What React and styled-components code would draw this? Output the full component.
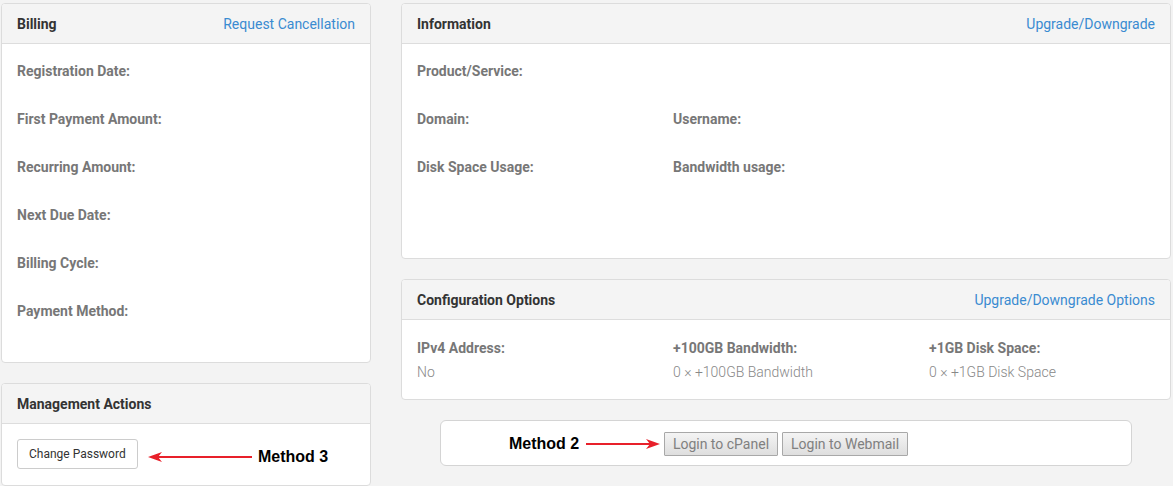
import React from "react";
import styled, { createGlobalStyle } from "styled-components";

const GlobalStyle = createGlobalStyle`
  html, body {
    margin: 0;
    padding: 0;
    background: #f3f3f3;
    font-family: Roboto, "Liberation Sans", Arial, sans-serif;
    font-size: 14px;
    color: #333;
  }
`;

const Page = styled.div`
  display: grid;
  grid-template-columns: 370px 770px;
  column-gap: 30px;
  padding: 3px 2px 0 1px;
  align-items: start;
`;

const Column = styled.div`
  display: flex;
  flex-direction: column;
  gap: ${(p) => p.gap || 21}px;
`;

const Card = styled.div`
  background: #fff;
  border: 1px solid #dcdcdc;
  border-radius: 4px;
  height: ${(p) => (p.height ? `${p.height}px` : "auto")};
  box-sizing: border-box;
  overflow: hidden;
`;

const CardHeader = styled.div`
  height: 40px;
  box-sizing: border-box;
  display: flex;
  align-items: center;
  justify-content: space-between;
  padding: 0 15px 0 15px;
  background: #f4f4f4;
  border-bottom: 1px solid #dddddd;
`;

const Title = styled.h3`
  margin: 0;
  font-size: 14px;
  font-weight: 700;
  color: #333;
`;

const HeaderLink = styled.a`
  color: #3a8bd1;
  font-size: 14px;
  text-decoration: none;
  cursor: pointer;
`;

const ListBody = styled.div`
  padding: 17px 15px 0 15px;
`;

const Row = styled.div`
  height: 48px;
`;

const Grid = styled.div`
  display: grid;
  grid-template-columns: 1fr 1fr 1fr;
  column-gap: 30px;
`;

const Label = styled.div`
  font-weight: 700;
  color: #777;
  line-height: 20px;
`;

const Value = styled.div`
  color: #888;
  font-weight: 300;
  line-height: 20px;
  margin-top: 4px;
`;

const ConfigBody = styled.div`
  padding: 18px 15px 17px 15px;
`;

const ActionBody = styled.div`
  position: relative;
  padding: 15px 15px 16px 15px;
`;

const OutlineButton = styled.button`
  font-family: Roboto, "Liberation Sans", Arial, sans-serif;
  font-size: 12px;
  color: #333;
  background: #fff;
  border: 1px solid #ccc;
  border-radius: 3px;
  height: 30px;
  padding: 0 11px;
  cursor: pointer;
`;

const LoginBox = styled.div`
  position: relative;
  align-self: center;
  width: 692px;
  height: 46px;
  box-sizing: border-box;
  background: #fff;
  border: 1px solid #d4d4d4;
  border-radius: 6px;
  display: flex;
  align-items: center;
  justify-content: center;
  gap: 4px;
`;

const GrayButton = styled.button`
  font-family: Roboto, "Liberation Sans", Arial, sans-serif;
  font-size: 14px;
  color: #808080;
  height: 24px;
  padding: 0 8px;
  margin-top: 2px;
  border: 1px solid #a8a8a8;
  border-radius: 1px;
  background: linear-gradient(#f4f4f4, #dedede);
  cursor: pointer;
`;

const Note = styled.div`
  position: absolute;
  left: ${(p) => p.left}px;
  top: ${(p) => p.top}px;
  display: flex;
  align-items: center;
  gap: ${(p) => p.gap || 6}px;
  font-family: "Liberation Sans", Arial, sans-serif;
  font-weight: 700;
  font-size: 16px;
  color: #000;
  pointer-events: none;
`;

const Arrow = ({ width, dir }) => (
  <svg width={width} height="12" viewBox={`0 0 ${width} 12`}>
    {dir === "left" ? (
      <>
        <line x1="8" y1="6" x2={width} y2="6" stroke="#e8202a" strokeWidth="2" />
        <polygon points="0,6 14,1 10,6 14,11" fill="#e8202a" />
      </>
    ) : (
      <>
        <line x1="0" y1="6" x2={width - 8} y2="6" stroke="#e8202a" strokeWidth="2" />
        <polygon points={`${width},6 ${width - 14},1 ${width - 10},6 ${width - 14},11`} fill="#e8202a" />
      </>
    )}
  </svg>
);

const billing = [
  "Registration Date:",
  "First Payment Amount:",
  "Recurring Amount:",
  "Next Due Date:",
  "Billing Cycle:",
  "Payment Method:",
];

const config = [
  { label: "IPv4 Address:", value: "No" },
  { label: "+100GB Bandwidth:", value: "0 × +100GB Bandwidth" },
  { label: "+1GB Disk Space:", value: "0 × +1GB Disk Space" },
];

export default function App() {
  return (
    <>
      <GlobalStyle />
      <Page>
        <Column gap={20}>
          <Card height={360}>
            <CardHeader>
              <Title>Billing</Title>
              <HeaderLink>Request Cancellation</HeaderLink>
            </CardHeader>
            <ListBody>
              {billing.map((b) => (
                <Row key={b}>
                  <Label>{b}</Label>
                </Row>
              ))}
            </ListBody>
          </Card>
          <Card>
            <CardHeader>
              <Title>Management Actions</Title>
            </CardHeader>
            <ActionBody>
              <OutlineButton>Change Password</OutlineButton>
              <Note left={146} top={24} gap={6}>
                <Arrow width={104} dir="left" />
                Method 3
              </Note>
            </ActionBody>
          </Card>
        </Column>
        <Column gap={20}>
          <Card height={256}>
            <CardHeader>
              <Title>Information</Title>
              <HeaderLink>Upgrade/Downgrade</HeaderLink>
            </CardHeader>
            <ListBody>
              <Row>
                <Label>Product/Service:</Label>
              </Row>
              <Row>
                <Grid>
                  <Label>Domain:</Label>
                  <Label>Username:</Label>
                </Grid>
              </Row>
              <Row>
                <Grid>
                  <Label>Disk Space Usage:</Label>
                  <Label>Bandwidth usage:</Label>
                </Grid>
              </Row>
            </ListBody>
          </Card>
          <Card height={121}>
            <CardHeader>
              <Title>Configuration Options</Title>
              <HeaderLink>Upgrade/Downgrade Options</HeaderLink>
            </CardHeader>
            <ConfigBody>
              <Grid>
                {config.map((c) => (
                  <div key={c.label}>
                    <Label>{c.label}</Label>
                    <Value>{c.value}</Value>
                  </div>
                ))}
              </Grid>
            </ConfigBody>
          </Card>
          <LoginBox>
            <GrayButton>Login to cPanel</GrayButton>
            <GrayButton>Login to Webmail</GrayButton>
            <Note left={68} top={14} gap={7}>
              Method 2
              <Arrow width={74} dir="right" />
            </Note>
          </LoginBox>
        </Column>
      </Page>
    </>
  );
}
